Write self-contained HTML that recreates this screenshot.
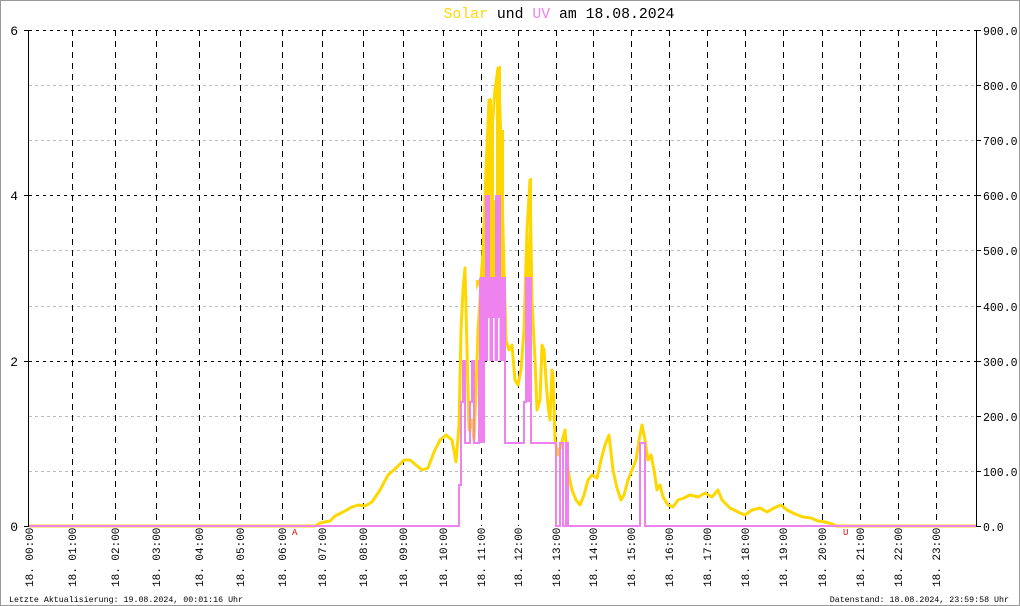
<!DOCTYPE html>
<html><head><meta charset="utf-8"><style>
html,body{margin:0;padding:0;background:#fff}
svg{display:block}
text{font-family:"Liberation Mono","DejaVu Sans Mono",monospace}
</style></head><body>
<svg width="1020" height="606" viewBox="0 0 1020 606" xmlns="http://www.w3.org/2000/svg">
<rect x="0.5" y="0.5" width="1019" height="605" fill="#fff" stroke="#999"/>
<text x="559" y="18" font-size="14.8" text-anchor="middle"><tspan fill="#FFD700">Solar</tspan><tspan fill="#000"> und </tspan><tspan fill="#EE82EE">UV</tspan><tspan fill="#000"> am 18.08.2024</tspan></text>
<g stroke="#bbb" stroke-dasharray="3,3" stroke-width="1">
<line x1="29" y1="85.5" x2="976" y2="85.5"/><line x1="29" y1="140.5" x2="976" y2="140.5"/>
<line x1="29" y1="250.5" x2="976" y2="250.5"/><line x1="29" y1="306.5" x2="976" y2="306.5"/>
<line x1="29" y1="416.5" x2="976" y2="416.5"/><line x1="29" y1="471.5" x2="976" y2="471.5"/>
</g>
<g stroke="#000" stroke-dasharray="3,4" stroke-width="1">
<line x1="29" y1="30.5" x2="976" y2="30.5"/><line x1="29" y1="195.5" x2="976" y2="195.5"/><line x1="29" y1="361.5" x2="976" y2="361.5"/>
</g>
<g stroke="#000" stroke-dasharray="6,5" stroke-width="1">
<line x1="72.5" y1="30" x2="72.5" y2="526"/><line x1="115.5" y1="30" x2="115.5" y2="526"/><line x1="156.5" y1="30" x2="156.5" y2="526"/><line x1="199.5" y1="30" x2="199.5" y2="526"/><line x1="240.5" y1="30" x2="240.5" y2="526"/><line x1="282.5" y1="30" x2="282.5" y2="526"/><line x1="322.5" y1="30" x2="322.5" y2="526"/><line x1="363.5" y1="30" x2="363.5" y2="526"/><line x1="403.5" y1="30" x2="403.5" y2="526"/><line x1="443.5" y1="30" x2="443.5" y2="526"/><line x1="481.5" y1="30" x2="481.5" y2="526"/><line x1="518.5" y1="30" x2="518.5" y2="526"/><line x1="556.5" y1="30" x2="556.5" y2="526"/><line x1="593.5" y1="30" x2="593.5" y2="526"/><line x1="631.5" y1="30" x2="631.5" y2="526"/><line x1="669.5" y1="30" x2="669.5" y2="526"/><line x1="707.5" y1="30" x2="707.5" y2="526"/><line x1="745.5" y1="30" x2="745.5" y2="526"/><line x1="783.5" y1="30" x2="783.5" y2="526"/><line x1="822.5" y1="30" x2="822.5" y2="526"/><line x1="860.5" y1="30" x2="860.5" y2="526"/><line x1="898.5" y1="30" x2="898.5" y2="526"/><line x1="936.5" y1="30" x2="936.5" y2="526"/>
</g>
<g stroke="#000" stroke-width="1">
<line x1="28.5" y1="30" x2="28.5" y2="527"/><line x1="976.5" y1="30" x2="976.5" y2="527"/>
<line x1="24" y1="30.5" x2="29" y2="30.5"/><line x1="24" y1="195.5" x2="29" y2="195.5"/><line x1="24" y1="361.5" x2="29" y2="361.5"/><line x1="24" y1="526.5" x2="29" y2="526.5"/>
<line x1="976" y1="30.5" x2="981" y2="30.5"/><line x1="976" y1="85.5" x2="981" y2="85.5"/><line x1="976" y1="140.5" x2="981" y2="140.5"/><line x1="976" y1="195.5" x2="981" y2="195.5"/><line x1="976" y1="250.5" x2="981" y2="250.5"/><line x1="976" y1="306.5" x2="981" y2="306.5"/><line x1="976" y1="361.5" x2="981" y2="361.5"/><line x1="976" y1="416.5" x2="981" y2="416.5"/><line x1="976" y1="471.5" x2="981" y2="471.5"/><line x1="976" y1="526.5" x2="981" y2="526.5"/>
</g>
<g font-size="13" fill="#000" text-anchor="end">
<text x="18" y="35">6</text><text x="18" y="200">4</text><text x="18" y="366">2</text><text x="18" y="531">0</text>
</g>
<g font-size="11.5" fill="#000">
<text x="983" y="35">900.0</text><text x="983" y="90">800.0</text><text x="983" y="145">700.0</text><text x="983" y="200">600.0</text><text x="983" y="255">500.0</text><text x="983" y="311">400.0</text><text x="983" y="366">300.0</text><text x="983" y="421">200.0</text><text x="983" y="476">100.0</text><text x="983" y="531">0.0</text>
</g>
<g fill="#FFD700">
<polygon points="476,300 476,290 479,285 482,250 485,200 487,160 489,140 490,97 492,100 492,118 494,118 494,200 496,200 496,90 497,72 499,66 501,66 501,125 502,125 502,130 504,130 504,280 476,280"/>
<polygon points="527,280 527,260 529,230 530,178 532,178 532,280"/>
</g>
<polyline fill="none" stroke="#FFD700" stroke-width="3" stroke-linejoin="round" points="29,526 315,526 320,523 330,521 335,516 345,511 352,507 358,505 365,506 372,502 380,490 388,475 396,468 404,460 410,460 416,465 422,470 428,468 434,452 440,440 446,435 452,440 456,462 459,425 461,330 463,290 465,268 467,350 469,430 472,420 474,440 476,390 478,330 480,300 483,250 486,170 489,100 492,130 495,90 498,68 500,110 503,230 506,340 509,350 512,345 515,380 518,385 521,370 524,330 527,230 530,180 532,300 535,360 537,410 540,400 542,345 544,350 546,380 548,405 550,420 552,370 553,375 555,440 558,455 561,445 565,430 568,470 572,490 576,500 580,505 584,495 588,480 592,475 597,478 601,460 605,445 609,435 613,470 617,488 621,500 624,495 628,480 632,470 636,460 639,440 642,425 645,440 648,460 651,455 654,470 657,490 660,485 663,497 668,505 673,507 678,500 684,498 690,495 698,497 705,493 712,497 718,490 722,500 730,508 738,512 745,515 752,510 760,508 767,512 774,508 781,505 787,510 795,514 803,517 811,518 818,521 825,522 832,524 836,526 976,526"/>
<g fill="#EE82EE">
<rect x="479" y="278" width="6" height="165"/>
<rect x="485" y="195" width="5" height="166"/>
<rect x="490" y="278" width="5" height="83"/>
<rect x="495" y="195" width="6" height="166"/>
<rect x="501" y="278" width="4" height="83"/>
<rect x="527" y="278" width="4" height="124"/>
</g>
<g fill="#fff">
<rect x="488" y="318" width="1.5" height="43"/><rect x="493" y="318" width="1.5" height="43"/><rect x="498" y="318" width="1.5" height="43"/>
</g>
<polyline fill="none" stroke="#EE82EE" stroke-width="2" points="29,526 459,526 459,485 461,485 461,402 463,402 463,361 465,361 465,443 470,443 470,402 472,402 472,361 474,361 474,443 479,443 479,361 481,361 481,278 505,278 505,361 505,443 524,443 524,402 526,402 526,278 531,278 531,443 556,443 556,526 560,526 560,443 563,443 563,526 566,526 566,443 568,443 568,526 640,526 640,443 645,443 645,526 976,526"/>
<text x="292" y="535" font-size="9" fill="#e00">A</text>
<text x="843" y="535" font-size="9" fill="#e00">U</text>
<g font-size="11" fill="#000">
<text transform="translate(33,587) rotate(-90)">18. 00:00</text><text transform="translate(76,587) rotate(-90)">18. 01:00</text><text transform="translate(119,587) rotate(-90)">18. 02:00</text><text transform="translate(160,587) rotate(-90)">18. 03:00</text><text transform="translate(203,587) rotate(-90)">18. 04:00</text><text transform="translate(244,587) rotate(-90)">18. 05:00</text><text transform="translate(286,587) rotate(-90)">18. 06:00</text><text transform="translate(326,587) rotate(-90)">18. 07:00</text><text transform="translate(367,587) rotate(-90)">18. 08:00</text><text transform="translate(407,587) rotate(-90)">18. 09:00</text><text transform="translate(447,587) rotate(-90)">18. 10:00</text><text transform="translate(485,587) rotate(-90)">18. 11:00</text><text transform="translate(522,587) rotate(-90)">18. 12:00</text><text transform="translate(560,587) rotate(-90)">18. 13:00</text><text transform="translate(597,587) rotate(-90)">18. 14:00</text><text transform="translate(635,587) rotate(-90)">18. 15:00</text><text transform="translate(673,587) rotate(-90)">18. 16:00</text><text transform="translate(711,587) rotate(-90)">18. 17:00</text><text transform="translate(749,587) rotate(-90)">18. 18:00</text><text transform="translate(787,587) rotate(-90)">18. 19:00</text><text transform="translate(826,587) rotate(-90)">18. 20:00</text><text transform="translate(864,587) rotate(-90)">18. 21:00</text><text transform="translate(902,587) rotate(-90)">18. 22:00</text><text transform="translate(940,587) rotate(-90)">18. 23:00</text>
</g>
<text x="9" y="602" font-size="8.3" fill="#000">Letzte Aktualisierung: 19.08.2024, 00:01:16 Uhr</text>
<text x="1009" y="602" font-size="8.3" fill="#000" text-anchor="end">Datenstand: 18.08.2024, 23:59:58 Uhr</text>
</svg>
</body></html>
